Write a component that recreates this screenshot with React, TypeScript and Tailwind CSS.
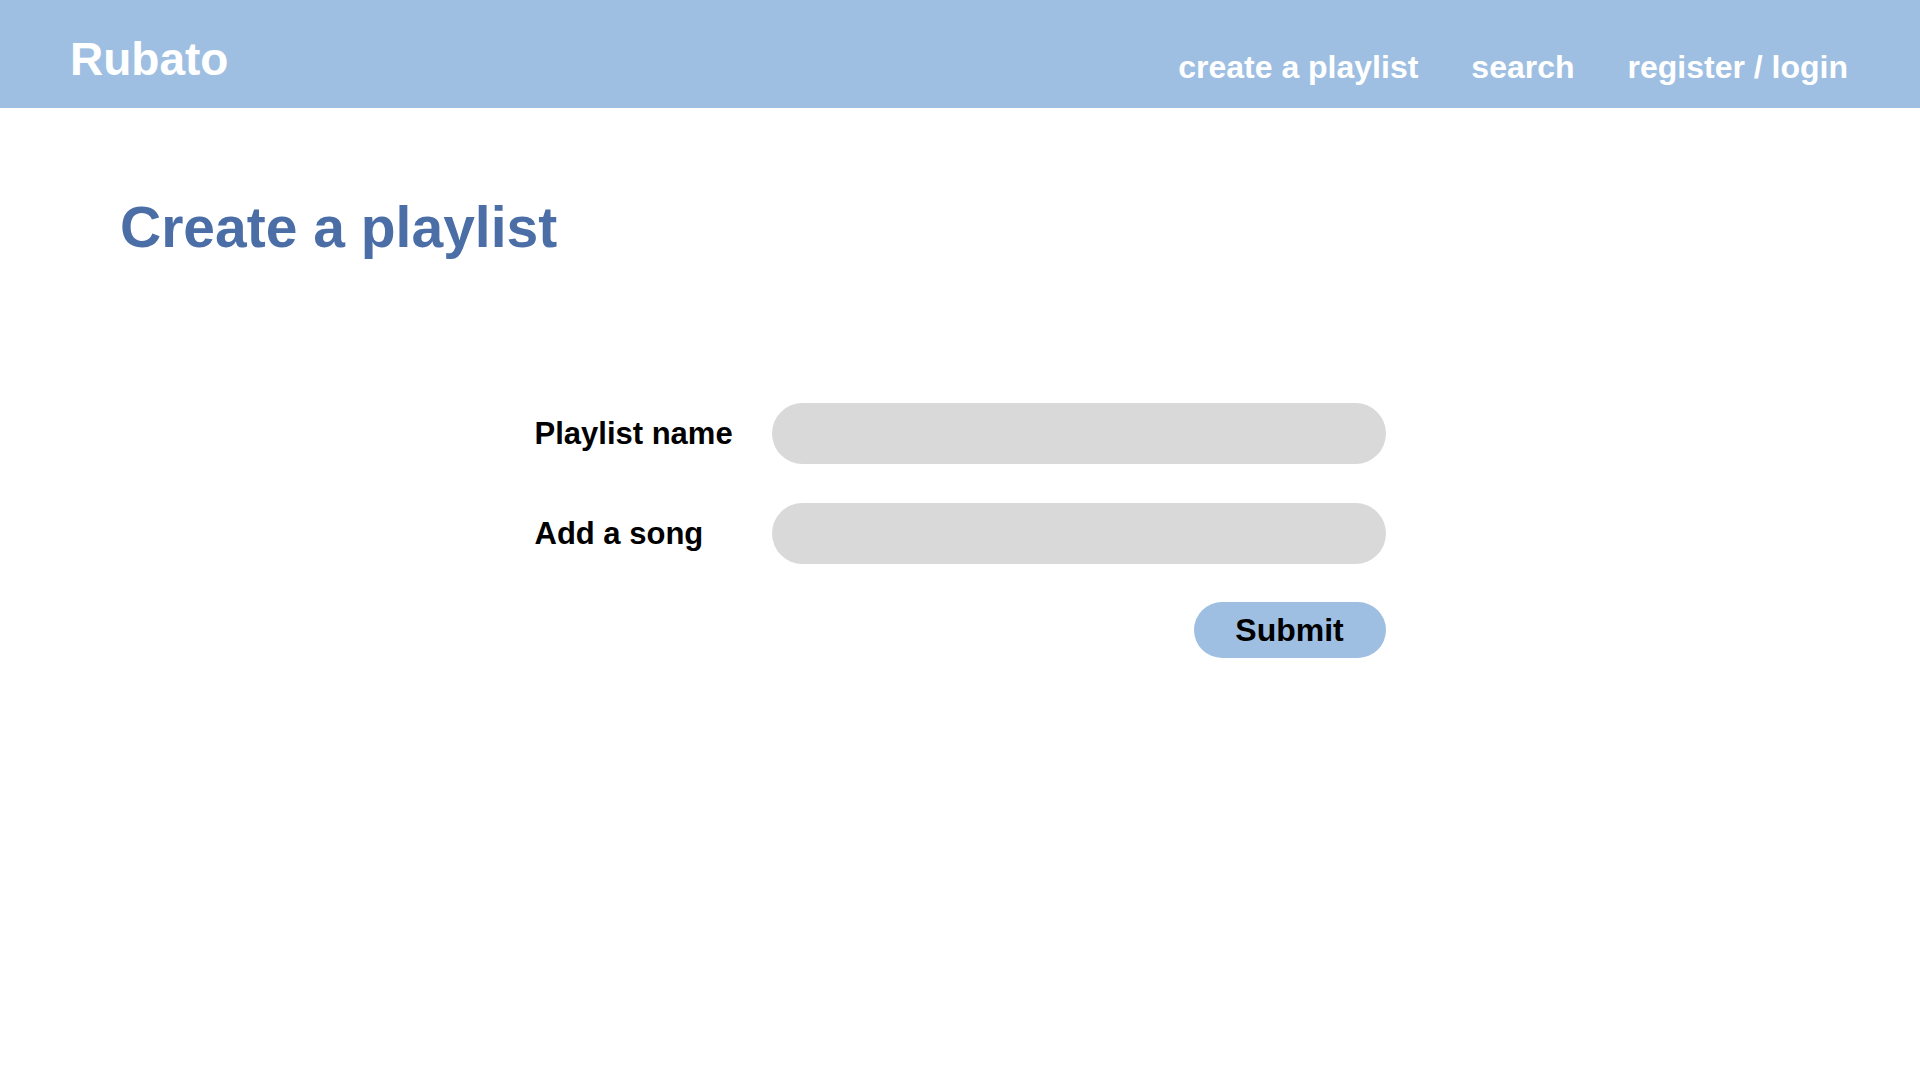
export default function App() {
  return (
    <div className="min-h-screen w-full bg-white font-['Liberation_Sans',Arial,sans-serif]">
      <header className="h-[108px] w-full bg-[#9ebfe2] flex items-start justify-between pl-[70px] pr-[72px]">
        <a href="#" className="mt-[36px] text-[46px] leading-none font-bold text-white">
          Rubato
        </a>
        <nav className="mt-[51px] flex items-center gap-[53px] text-[32px] leading-none font-bold text-white">
          <a href="#">create a playlist</a>
          <a href="#">search</a>
          <a href="#">register / login</a>
        </nav>
      </header>

      <main>
        <h1 className="mt-[91px] pl-[120px] text-[57px] leading-none font-bold text-[#4b6ea7]">
          Create a playlist
        </h1>

        <form
          className="mx-auto mt-[147px] w-[851px] flex flex-col gap-[39px]"
          onSubmit={(e) => e.preventDefault()}
        >
          <div className="flex items-center">
            <label className="w-[237px] text-[31px] leading-none font-bold text-black">
              Playlist name
            </label>
            <input
              type="text"
              className="h-[61px] flex-1 rounded-full bg-[#d9d9d9] px-6 text-[24px] outline-none"
            />
          </div>
          <div className="flex items-center">
            <label className="w-[237px] text-[31px] leading-none font-bold text-black">
              Add a song
            </label>
            <input
              type="text"
              className="h-[61px] flex-1 rounded-full bg-[#d9d9d9] px-6 text-[24px] outline-none"
            />
          </div>
          <div className="flex justify-end -mt-px">
            <button
              type="submit"
              className="h-[56px] w-[192px] rounded-full bg-[#9ebfe2] text-[32px] leading-none font-bold text-black"
            >
              Submit
            </button>
          </div>
        </form>
      </main>
    </div>
  );
}
